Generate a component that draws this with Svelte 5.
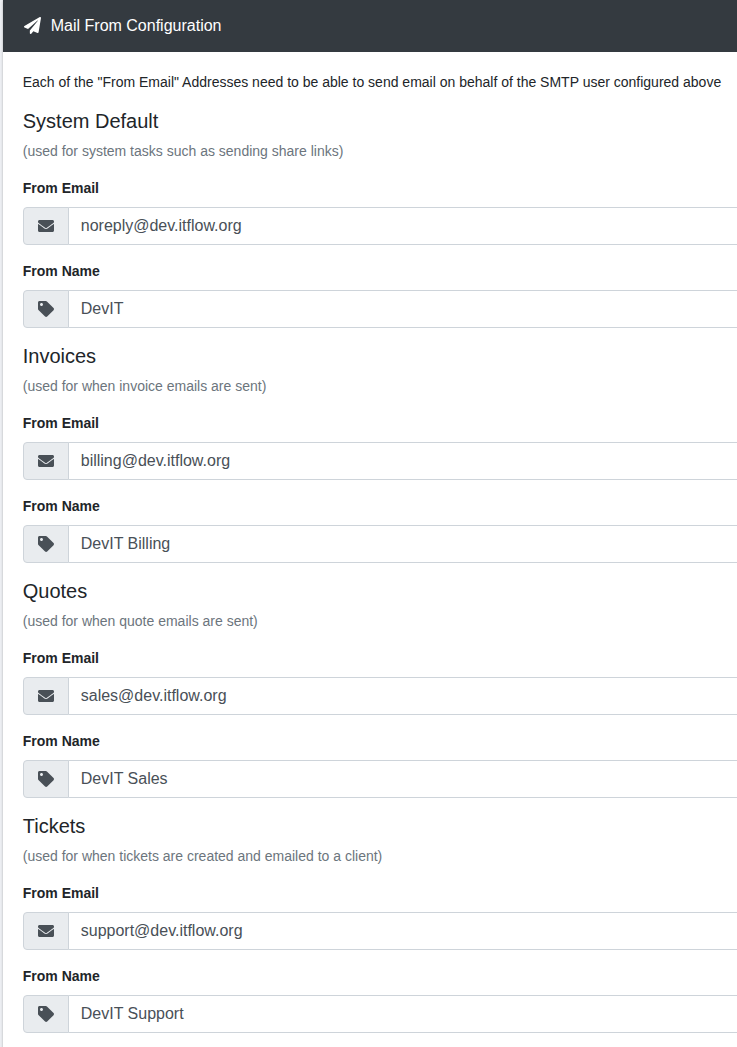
<script lang="ts">
  const groups = [
    { title: 'System Default', note: '(used for system tasks such as sending share links)', email: 'noreply@dev.itflow.org', name: 'DevIT' },
    { title: 'Invoices', note: '(used for when invoice emails are sent)', email: 'billing@dev.itflow.org', name: 'DevIT Billing' },
    { title: 'Quotes', note: '(used for when quote emails are sent)', email: 'sales@dev.itflow.org', name: 'DevIT Sales' },
    { title: 'Tickets', note: '(used for when tickets are created and emailed to a client)', email: 'support@dev.itflow.org', name: 'DevIT Support' },
  ];

  const envelope = 'M502.3 190.8c3.9-3.1 9.7-.2 9.7 4.7V400c0 26.5-21.5 48-48 48H48c-26.5 0-48-21.5-48-48V195.6c0-5 5.7-7.8 9.7-4.7 22.4 17.4 52.1 39.5 154.1 113.6 21.1 15.4 56.7 47.8 92.2 47.6 35.7.3 72-32.8 92.3-47.6 102-74.1 131.6-96.3 154-113.7zM256 320c23.2.4 56.6-29.2 73.4-41.4 132.7-96.3 142.8-104.7 173.4-128.7 5.8-4.5 9.2-11.5 9.2-18.9v-19c0-26.5-21.5-48-48-48H48C21.5 64 0 85.5 0 112v19c0 7.4 3.4 14.3 9.2 18.9 30.6 23.9 40.7 32.4 173.4 128.7 16.8 12.2 50.2 41.8 73.4 41.4z';
  const tag = 'M0 252.118V48C0 21.49 21.49 0 48 0h204.118a48 48 0 0 1 33.941 14.059l211.882 211.882c18.745 18.745 18.745 49.137 0 67.882L293.823 497.941c-18.745 18.745-49.137 18.745-67.882 0L14.059 286.059A48 48 0 0 1 0 252.118zM112 64c-26.51 0-48 21.49-48 48s21.49 48 48 48 48-21.49 48-48-21.49-48-48-48z';
  const plane = 'M476 3.2L12.5 270.6c-18.1 10.4-15.8 35.6 2.2 43.2L121 358.4l287.3-253.2c5.5-4.9 13.3 2.6 8.6 8.3L176 407v80.5c0 23.6 28.5 32.9 42.5 15.8L282 426l124.6 52.2c14.2 6 30.4-2.9 33-18.2l72-432C515 7.8 493.3-6.8 476 3.2z';
</script>

<div class="page">
  <div class="card">
    <div class="card-header">
      <span class="icon-box"><svg viewBox="0 0 512 512"><path d={plane} /></svg></span>
      <h3>Mail From Configuration</h3>
    </div>
    <div class="card-body">
      <p class="intro">Each of the "From Email" Addresses need to be able to send email on behalf of the SMTP user configured above</p>
      {#each groups as group}
        <h5>{group.title}</h5>
        <p class="note">{group.note}</p>
        <div class="form-group">
          <label for="{group.title}-email">From Email</label>
          <div class="input-group">
            <span class="addon"><svg viewBox="0 0 512 512"><path d={envelope} /></svg></span>
            <input id="{group.title}-email" type="text" value={group.email} />
          </div>
        </div>
        <div class="form-group">
          <label for="{group.title}-name">From Name</label>
          <div class="input-group">
            <span class="addon"><svg viewBox="0 0 512 512"><path d={tag} /></svg></span>
            <input id="{group.title}-name" type="text" value={group.name} />
          </div>
        </div>
      {/each}
    </div>
  </div>
</div>

<style>
  :global(body) {
    background: #eef0f4;
  }

  .page {
    height: 100vh;
    overflow: hidden;
    padding-left: 2.75px;
    font-family: "Liberation Sans", Arial, sans-serif;
    font-size: 14px;
    line-height: 1.5;
    color: #212529;
    box-sizing: border-box;
  }

  .card {
    width: 900px;
    background: #fff;
    box-shadow: 0 0 1px rgba(0, 0, 0, 0.125), 0 1px 3px rgba(0, 0, 0, 0.2);
  }

  .card-header {
    display: flex;
    align-items: center;
    height: 52px;
    padding: 0 20px;
    box-sizing: border-box;
    background: #343a40;
    color: #fff;
  }

  .icon-box {
    display: flex;
    justify-content: center;
    width: 20px;
    margin-right: 8px;
    padding-bottom: 2px;
  }

  .icon-box svg {
    width: 17px;
    height: 17px;
    fill: #fff;
  }

  h3 {
    margin: 0;
    font-size: 16px;
    font-weight: 400;
    line-height: 1.2;
  }

  .card-body {
    padding: 20px;
  }

  .intro,
  .note {
    margin: 0 0 16px;
  }

  .note {
    color: #6c757d;
  }

  h5 {
    margin: 0 0 8px;
    font-size: 20px;
    font-weight: 500;
    line-height: 1.2;
  }

  .form-group {
    margin-bottom: 16px;
  }

  label {
    display: block;
    margin-bottom: 8px;
    font-weight: 700;
  }

  .input-group {
    display: flex;
    height: 38px;
  }

  .addon {
    display: flex;
    align-items: center;
    justify-content: center;
    width: 46px;
    box-sizing: border-box;
    background: #e9ecef;
    border: 1px solid #ced4da;
    border-radius: 4px 0 0 4px;
  }

  .addon svg {
    width: 16px;
    height: 16px;
    fill: #495057;
  }

  input {
    flex: 1;
    min-width: 0;
    margin-left: -1px;
    padding: 6px 12px;
    box-sizing: border-box;
    border: 1px solid #ced4da;
    border-radius: 0 4px 4px 0;
    background: #fff;
    color: #495057;
    font: inherit;
    font-size: 16px;
    line-height: 1.5;
    outline: none;
  }
</style>
